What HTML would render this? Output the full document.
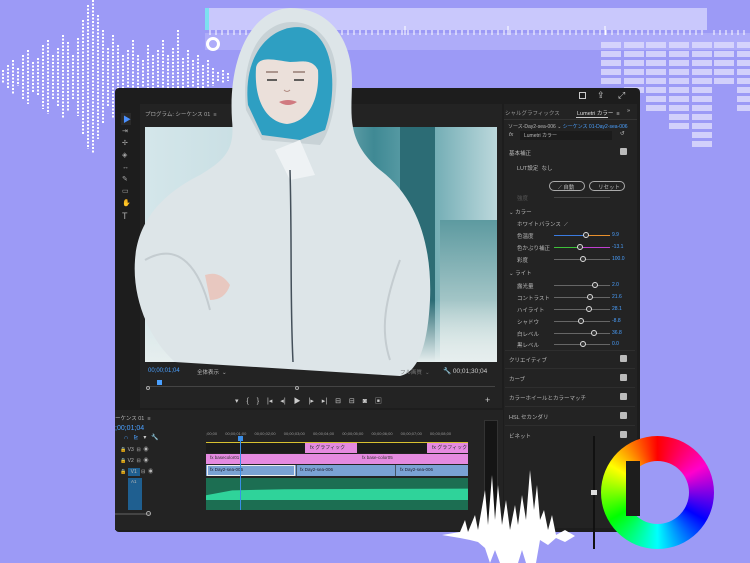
<!DOCTYPE html>
<html><head><meta charset="utf-8"><style>
*{margin:0;padding:0;box-sizing:border-box}
body{width:750px;height:563px;overflow:hidden;background:#9c9af6;font-family:"Liberation Sans","Noto Sans CJK JP",sans-serif;position:relative}
.a{position:absolute}
.t{position:absolute;font-size:5.5px;color:#b8b8b8;white-space:nowrap}
.cb{position:absolute;width:7px;height:7px;background:#bbb;border-radius:1px}
.sl{position:absolute;height:1px;background:#666}
.kn{position:absolute;width:6px;height:6px;border:1px solid #ddd;border-radius:50%;background:#333;top:-3px}
.v{position:absolute;font-size:5px;color:#4aa0ff}
.sep{position:absolute;left:505px;width:130px;height:1px;background:#2e2e2e}
</style></head><body>

<div class="a" style="left:205px;top:8px;width:502px;height:22px;background:#c9c8fc"></div>
<div class="a" style="left:205px;top:33px;width:545px;height:17px;background:#aeacf9"></div>
<div class="a" style="left:205px;top:8px;width:4px;height:22px;background:#7de0f0"></div>
<div class="a" style="left:206px;top:37px;width:14px;height:14px;border:3px solid #fff;border-radius:50%"></div>
<svg class="a" style="left:205px;top:26px" width="545" height="10">
<g stroke="#fff" stroke-width="1">
<path d="M5 4v5M11 4v5M17 4v5M23 4v5M29 4v5M35 4v5M41 4v5M47 4v5M53 4v5M59 4v5M65 4v5M71 4v5M77 4v5M83 4v5M89 4v5M95 4v5M101 4v5M107 4v5M113 4v5M119 4v5M125 4v5M131 4v5M137 4v5M143 4v5M149 4v5M155 4v5M161 4v5M167 4v5M173 4v5M179 4v5M185 4v5M191 4v5M197 4v5M203 4v5M209 4v5M215 4v5M221 4v5M227 4v5M233 4v5M239 4v5M245 4v5M251 4v5M257 4v5M263 4v5M269 4v5M275 4v5M281 4v5M287 4v5M293 4v5M299 4v5M305 4v5M311 4v5M317 4v5M323 4v5M329 4v5M335 4v5M341 4v5M347 4v5M353 4v5M359 4v5M365 4v5M371 4v5M377 4v5M383 4v5M389 4v5M395 4v5M401 4v5M407 4v5M413 4v5M419 4v5M425 4v5M431 4v5M437 4v5M443 4v5M449 4v5M455 4v5M461 4v5M467 4v5M473 4v5M479 4v5M485 4v5M491 4v5M497 4v5M509 4v5M515 4v5M521 4v5M527 4v5M533 4v5M539 4v5"/>
<path d="M200 0v9M303 0v9M400 0v9"/></g></svg>

<svg class="a" style="left:600px;top:40px" width="150" height="120">
<g fill="#dcdafd" opacity=".85">
<rect x="1" y="2" width="20" height="6"/><rect x="1" y="11" width="20" height="6"/><rect x="1" y="20" width="20" height="6"/><rect x="1" y="29" width="20" height="6"/><rect x="1" y="38" width="20" height="6"/>
<rect x="24" y="2" width="20" height="6"/><rect x="24" y="11" width="20" height="6"/><rect x="24" y="20" width="20" height="6"/><rect x="24" y="29" width="20" height="6"/><rect x="24" y="38" width="20" height="6"/><rect x="24" y="47" width="20" height="6"/>
<rect x="46" y="2" width="20" height="6"/><rect x="46" y="11" width="20" height="6"/><rect x="46" y="20" width="20" height="6"/><rect x="46" y="29" width="20" height="6"/><rect x="46" y="38" width="20" height="6"/><rect x="46" y="47" width="20" height="6"/><rect x="46" y="56" width="20" height="6"/><rect x="46" y="65" width="20" height="6"/>
<rect x="69" y="2" width="20" height="6"/><rect x="69" y="11" width="20" height="6"/><rect x="69" y="20" width="20" height="6"/><rect x="69" y="29" width="20" height="6"/><rect x="69" y="38" width="20" height="6"/><rect x="69" y="47" width="20" height="6"/><rect x="69" y="56" width="20" height="6"/><rect x="69" y="65" width="20" height="6"/><rect x="69" y="74" width="20" height="6"/><rect x="69" y="83" width="20" height="6"/>
<rect x="92" y="2" width="20" height="6"/><rect x="92" y="11" width="20" height="6"/><rect x="92" y="20" width="20" height="6"/><rect x="92" y="29" width="20" height="6"/><rect x="92" y="38" width="20" height="6"/><rect x="92" y="47" width="20" height="6"/><rect x="92" y="56" width="20" height="6"/><rect x="92" y="65" width="20" height="6"/><rect x="92" y="74" width="20" height="6"/><rect x="92" y="83" width="20" height="6"/><rect x="92" y="92" width="20" height="6"/><rect x="92" y="101" width="20" height="6"/>
<rect x="114" y="2" width="20" height="6"/><rect x="114" y="11" width="20" height="6"/><rect x="114" y="20" width="20" height="6"/><rect x="114" y="29" width="20" height="6"/><rect x="114" y="38" width="20" height="6"/>
<rect x="137" y="2" width="20" height="6"/><rect x="137" y="11" width="20" height="6"/><rect x="137" y="20" width="20" height="6"/><rect x="137" y="29" width="20" height="6"/><rect x="137" y="38" width="20" height="6"/><rect x="137" y="47" width="20" height="6"/><rect x="137" y="56" width="20" height="6"/><rect x="137" y="65" width="20" height="6"/>
</g></svg>

<svg class="a" style="left:0;top:0" width="240" height="160">
<g stroke="#fff" stroke-width="2" stroke-dasharray="2 1.5">
<path d="M3 70v14M8 65v24M13 60v34M18 68v18M23 55v44M28 50v54M33 62v30M38 58v38M43 45v64M48 40v74M53 55v44M58 48v58M63 35v84M68 42v70M73 55v44M78 38v78M83 20v114M88 5v144M93 0v154M98 15v124M103 30v94M108 48v58M113 35v84M118 45v64M123 55v44M128 50v54M133 40v74M138 55v44M143 60v34M148 45v64M153 55v44M158 50v54M163 40v74M168 55v44M173 48v58M178 30v94M183 58v38M188 50v54M193 60v34M198 55v44M203 65v24M208 60v34M213 68v18M218 72v10M223 70v14M228 73v8"/>
</g></svg>

<div class="a" style="left:115px;top:88px;width:525px;height:444px;background:#1d1d1d;border-radius:4px"></div>
<div class="a" style="left:140px;top:104px;width:362px;height:304px;background:#232323"></div>
<div class="a" style="left:504px;top:104px;width:133px;height:424px;background:#232323"></div>
<div class="a" style="left:115px;top:410px;width:388px;height:120px;background:#232323"></div>
<div class="a" style="left:579px;top:92px;width:7px;height:7px;border:1px solid #ccc"></div>
<div class="t" style="left:597px;top:90px;font-size:9px;color:#ccc">⇪</div>
<div class="t" style="left:618px;top:90px;font-size:9px;color:#ccc">⤢</div>
<div class="a" style="left:121px;top:113px;width:10px;height:12px;background:#2a2a2a"></div>
<div class="t" style="left:123px;top:114px;font-size:8px;color:#4a90ff">▶</div>
<div class="t" style="left:122px;top:126px;font-size:7px;line-height:12px;color:#aaa">⇥<br>✢<br>◈<br>↔<br>✎<br>▭<br>✋<br><span style="font-size:9px">T</span></div>
<div class="t" style="left:145px;top:110px;color:#aaa">プログラム: シーケンス 01 &nbsp;≡</div>

<div class="a" style="left:145px;top:127px;width:352px;height:235px;background:linear-gradient(90deg,#d4e6ea 0%,#c6dde2 35%,#3f8994 65%,#6aa8b0 80%,#bcd8dc 100%)"></div>
<div class="a" style="left:400px;top:127px;width:35px;height:235px;background:#2c6c75"></div>
<div class="a" style="left:440px;top:220px;width:57px;height:142px;background:linear-gradient(#5d9aa0,#d8e6e4)"></div>
<div class="a" style="left:145px;top:300px;width:352px;height:62px;background:linear-gradient(rgba(230,240,240,0),#e6eeee)"></div>

<svg class="a" style="left:0;top:0" width="750" height="563">
<path d="M232 120 C228 60 250 10 290 8 C330 8 352 40 352 80 C352 115 345 140 380 170 C420 200 432 250 430 300 C428 340 420 372 400 376 L175 362 C150 340 132 300 135 260 C138 215 170 190 200 175 C225 160 235 150 232 120Z" fill="#dde5e8"/>
<path d="M246 110 C240 50 265 22 292 22 C322 22 340 50 336 90 C334 115 328 135 320 145 L262 140 Z" fill="#c8d2d6"/>
<path d="M248 105 C242 45 280 22 305 28 C335 38 338 90 325 130 L300 140 L262 135 Z" fill="#2e9fc2"/>
<path d="M256 68 C258 55 275 60 290 62 C300 62 312 58 318 70 C320 100 308 122 287 124 C266 122 254 100 256 68Z" fill="#ebe0da"/>
<path d="M279 102 q9 -4 18 0 q-9 6 -18 0z" fill="#d07a80"/>
<path d="M267 80h10M294 80h10" stroke="#333" stroke-width="1.5"/>
<path d="M266 72h12M293 72h12" stroke="#6b4a40" stroke-width="1"/>
<path d="M284 90 q3 3 6 0" stroke="#b08a80" stroke-width="1" fill="none"/>
<path d="M275 150 L300 140 L315 175 L290 180Z" fill="#eef2f4"/>
<path d="M290 170 C292 240 290 300 293 362" stroke="#44505a" stroke-width="1.5" fill="none"/>
<path d="M205 275 q15 -5 25 10 q-5 15 -20 15z" fill="#e8c8c0"/>
<path d="M145 260 C180 240 200 270 210 310" stroke="#c4ccd0" stroke-width="2" fill="none"/>
<path d="M400 260 C385 300 380 330 390 360" stroke="#c4ccd0" stroke-width="2" fill="none"/>
</svg>

<div class="t" style="left:148px;top:368px;color:#4aa0ff;font-size:6px">00;00;01;04</div>
<div class="t" style="left:197px;top:368px">全体表示 &nbsp;⌄</div>
<div class="t" style="left:400px;top:368px;color:#777">フル画質 &nbsp;⌄</div>
<div class="t" style="left:443px;top:367px;font-size:6.5px;color:#ccc">🔧 00;01;30;04</div>
<div class="a" style="left:148px;top:386px;width:347px;height:1px;background:#444"></div>
<div class="a" style="left:157px;top:380px;width:5px;height:5px;background:#4aa0ff"></div>
<div class="a" style="left:146px;top:386px;width:4px;height:4px;border:1px solid #aaa;border-radius:50%"></div>
<div class="a" style="left:295px;top:386px;width:4px;height:4px;border:1px solid #aaa;border-radius:50%"></div>
<div class="t" style="left:235px;top:396px;font-size:7px;color:#ccc;word-spacing:6px">▾ { } |◂ ◂| ▶ |▸ ▸| ⊟ ⊟ ◙ ▣</div>
<div class="t" style="left:485px;top:395px;font-size:9px;color:#ccc">+</div>

<div class="t" style="left:115px;top:414px">ーケンス 01 &nbsp;≡</div>
<div class="t" style="left:115px;top:425px;color:#4aa0ff;font-size:7px">;00;01;04</div>
<div class="t" style="left:124px;top:434px;color:#4aa0ff;font-size:6px">∩ &nbsp; ⊵ &nbsp; <span style="color:#ccc">▾ &nbsp; 🔧</span></div>
<div class="t" style="left:206px;top:431px;font-size:4px;color:#999;word-spacing:7px">;00;00 00;00;01;00 00;00;02;00 00;00;03;00 00;00;04;00 00;00;05;00 00;00;06;00 00;00;07;00 00;00;08;00</div>
<div class="a" style="left:206px;top:442px;width:262px;height:1px;background:#d7c030"></div>
<div class="a" style="left:206px;top:443px;width:262px;height:10px;background:#1b1b1b"></div>
<div class="a" style="left:305px;top:443px;width:52px;height:10px;background:#e58ae0"></div>
<div class="a" style="left:427px;top:443px;width:41px;height:10px;background:#e58ae0"></div>
<div class="a" style="left:206px;top:454px;width:262px;height:10px;background:#e58ae0"></div>
<div class="a" style="left:206px;top:465px;width:262px;height:11px;background:#7aa2d4"></div>
<div class="a" style="left:207px;top:465px;width:88px;height:11px;border:1px solid #eee"></div>
<div class="a" style="left:296px;top:465px;width:1px;height:11px;background:#456"></div>
<div class="a" style="left:395px;top:465px;width:1px;height:11px;background:#456"></div>
<div class="t" style="left:310px;top:444px;font-size:5px;color:#333">fx グラフィック</div>
<div class="t" style="left:432px;top:444px;font-size:5px;color:#333">fx グラフィック</div>
<div class="t" style="left:210px;top:455px;font-size:4.5px;color:#333">fx basecolor01</div>
<div class="t" style="left:362px;top:455px;font-size:4.5px;color:#333">fx base-color05</div>
<div class="t" style="left:210px;top:467px;font-size:4.5px;color:#223">fx Day2-sea-006</div>
<div class="t" style="left:300px;top:467px;font-size:4.5px;color:#223">fx Day2-sea-006</div>
<div class="t" style="left:400px;top:467px;font-size:4.5px;color:#223">fx Day2-sea-006</div>
<div class="a" style="left:206px;top:478px;width:262px;height:32px;background:#1c6e52"></div>
<div class="a" style="left:206px;top:488px;width:262px;height:12px;background:#2fd39a;clip-path:polygon(0 60%,10% 20%,30% 10%,100% 5%,100% 100%,0 100%)"></div>
<div class="a" style="left:240px;top:436px;width:1px;height:74px;background:#3a8ee8"></div>
<div class="a" style="left:238px;top:436px;width:5px;height:5px;background:#3a8ee8"></div>
<div class="t" style="left:120px;top:445px;font-size:5px;line-height:11px">🔒 V3 &nbsp;⊟ &nbsp;◉<br>🔒 V2 &nbsp;⊟ &nbsp;◉<br>🔒 <span style="background:#1f5f90;padding:1px 3px">V1</span> ⊟ &nbsp;◉</div>
<div class="a" style="left:128px;top:478px;width:14px;height:32px;background:#1f5f90"></div>
<div class="t" style="left:131px;top:479px;font-size:4.5px">A1</div>
<div class="a" style="left:115px;top:513px;width:35px;height:2px;background:#444"></div>
<div class="a" style="left:146px;top:511px;width:5px;height:5px;border:1px solid #aaa;border-radius:50%"></div>
<div class="a" style="left:484px;top:420px;width:14px;height:108px;background:#151515;border:1px solid #333"></div>

<div class="t" style="left:505px;top:109px;color:#999">シャルグラフィックス</div>
<div class="t" style="left:577px;top:109px;color:#ddd">Lumetri カラー &nbsp;≡</div>
<div class="a" style="left:576px;top:117px;width:32px;height:1px;background:#ccc"></div>
<div class="t" style="left:627px;top:108px;color:#ccc">»</div>
<div class="a" style="left:504px;top:119px;width:133px;height:1px;background:#333"></div>
<div class="t" style="left:508px;top:123px;font-size:5px">ソース-Day2-sea-006 ⌄ <span style="color:#4aa0ff">シーケンス 01-Day2-sea-006</span></div>
<div class="t" style="left:509px;top:132px;font-style:italic">fx</div>
<div class="a" style="left:520px;top:131px;width:92px;height:9px;background:#1b1b1b"></div>
<div class="t" style="left:524px;top:132px;font-size:5px">Lumetri カラー</div>
<div class="t" style="left:620px;top:131px;color:#ccc">↺</div>
<div class="t" style="left:509px;top:149px">基本補正</div><div class="cb" style="left:620px;top:148px"></div>
<div class="t" style="left:517px;top:164px">LUT設定 &nbsp;なし</div>
<div class="a" style="left:549px;top:181px;width:36px;height:10px;border:1px solid #aaa;border-radius:5px"></div>
<div class="a" style="left:589px;top:181px;width:36px;height:10px;border:1px solid #aaa;border-radius:5px"></div>
<div class="t" style="left:558px;top:183px">⟋ 自動</div><div class="t" style="left:598px;top:183px">リセット</div>
<div class="t" style="left:517px;top:194px;color:#555">強度</div>
<div class="sl" style="left:554px;top:197px;width:56px;background:#444"></div>
<div class="t" style="left:509px;top:208px">⌄ カラー</div>
<div class="t" style="left:517px;top:220px">ホワイトバランス &nbsp;⟋</div>
<div class="t" style="left:517px;top:232px">色温度</div>
<div class="sl" style="left:554px;top:235px;width:56px;background:linear-gradient(90deg,#3a7be0 55%,#e8902c 55%)"><div class="kn" style="left:29px"></div></div><div class="v" style="left:612px;top:232px">9.9</div>
<div class="t" style="left:517px;top:244px">色かぶり補正</div>
<div class="sl" style="left:554px;top:247px;width:56px;background:linear-gradient(90deg,#3ec03a 45%,#c040d0 45%)"><div class="kn" style="left:23px"></div></div><div class="v" style="left:612px;top:244px">-13.1</div>
<div class="t" style="left:517px;top:256px">彩度</div>
<div class="sl" style="left:554px;top:259px;width:56px"><div class="kn" style="left:26px"></div></div><div class="v" style="left:612px;top:256px">100.0</div>
<div class="t" style="left:509px;top:269px">⌄ ライト</div>
<div class="t" style="left:517px;top:282px">露光量</div><div class="sl" style="left:554px;top:285px;width:56px"><div class="kn" style="left:38px"></div></div><div class="v" style="left:612px;top:282px">2.0</div>
<div class="t" style="left:517px;top:294px">コントラスト</div><div class="sl" style="left:554px;top:297px;width:56px"><div class="kn" style="left:33px"></div></div><div class="v" style="left:612px;top:294px">21.6</div>
<div class="t" style="left:517px;top:306px">ハイライト</div><div class="sl" style="left:554px;top:309px;width:56px"><div class="kn" style="left:32px"></div></div><div class="v" style="left:612px;top:306px">28.1</div>
<div class="t" style="left:517px;top:318px">シャドウ</div><div class="sl" style="left:554px;top:321px;width:56px"><div class="kn" style="left:24px"></div></div><div class="v" style="left:612px;top:318px">-8.8</div>
<div class="t" style="left:517px;top:330px">白レベル</div><div class="sl" style="left:554px;top:333px;width:56px"><div class="kn" style="left:37px"></div></div><div class="v" style="left:612px;top:330px">36.8</div>
<div class="t" style="left:517px;top:341px">黒レベル</div><div class="sl" style="left:554px;top:344px;width:56px"><div class="kn" style="left:26px"></div></div><div class="v" style="left:612px;top:341px">0.0</div>
<div class="sep" style="top:350px"></div>
<div class="t" style="left:509px;top:356px">クリエイティブ</div><div class="cb" style="left:620px;top:355px"></div>
<div class="sep" style="top:368px"></div>
<div class="t" style="left:509px;top:375px">カーブ</div><div class="cb" style="left:620px;top:374px"></div>
<div class="sep" style="top:387px"></div>
<div class="t" style="left:509px;top:394px">カラーホイールとカラーマッチ</div><div class="cb" style="left:620px;top:393px"></div>
<div class="sep" style="top:406px"></div>
<div class="t" style="left:509px;top:413px">HSL セカンダリ</div><div class="cb" style="left:620px;top:412px"></div>
<div class="sep" style="top:425px"></div>
<div class="t" style="left:509px;top:432px">ビネット</div><div class="cb" style="left:620px;top:431px"></div>

<div class="a" style="left:593px;top:436px;width:2px;height:113px;background:#111"></div>
<div class="a" style="left:591px;top:490px;width:6px;height:5px;background:#ddd"></div>

<div class="a" style="left:601px;top:436px;width:113px;height:113px;border-radius:50%;background:conic-gradient(#f00 0deg,#f0c 60deg,#00f 120deg,#0ff 180deg,#0f0 240deg,#ff0 300deg,#f00 360deg)"></div>
<div class="a" style="left:626px;top:461px;width:63px;height:63px;border-radius:50%;background:#9c9af6"></div>
<div class="a" style="left:626px;top:461px;width:14px;height:63px;background:#1d1d1d;clip-path:inset(0 0 8px 0)"></div>

<svg class="a" style="left:440px;top:470px" width="160" height="93">
<path d="M2 65 L20 62 L25 50 L28 62 L35 45 L38 60 L45 20 L48 55 L52 5 L55 50 L58 15 L62 55 L66 30 L70 60 L75 35 L78 55 L82 25 L86 50 L90 0 L94 40 L97 15 L100 50 L104 40 L108 60 L112 45 L116 65 L125 60 L135 66 L125 72 L116 68 L108 75 L100 70 L96 93 L86 93 L82 80 L78 93 L60 93 L55 80 L50 93 L45 78 L38 72 L30 70 L20 68 Z" fill="#fff"/>
</svg>
</body></html>
